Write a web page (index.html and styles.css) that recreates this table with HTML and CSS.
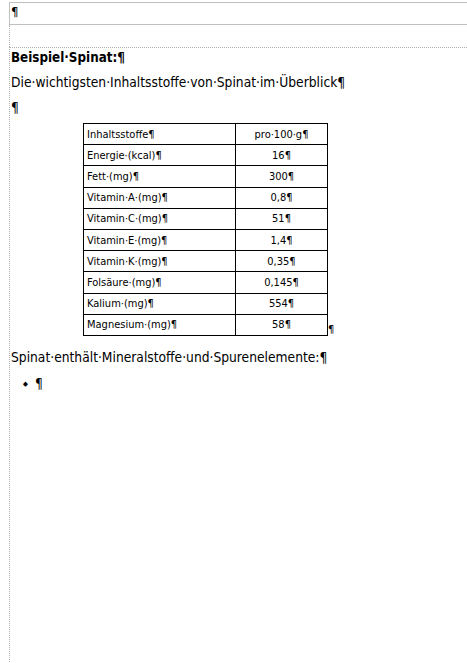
FILE: index.html
```html
<!DOCTYPE html>
<html lang="de">
<head>
<meta charset="utf-8">
<link rel="stylesheet" href="styles.css">
</head>
<body>
<div class="header"><span class="pil">¶</span></div>
<div class="gap"></div>
<div class="page">
  <p class="h">Beispiel·Spinat:<span class="pil">¶</span></p>
  <p class="t">Die·wichtigsten·Inhaltsstoffe·von·Spinat·im·Überblick<span class="pil">¶</span></p>
  <p class="t empty"><span class="pil">¶</span></p>
  <div class="tablewrap">
    <table class="tbl">
      <tr><td>Inhaltsstoffe¶</td><td>pro·100·g¶</td></tr>
      <tr><td>Energie·(kcal)¶</td><td>16¶</td></tr>
      <tr><td>Fett·(mg)¶</td><td>300¶</td></tr>
      <tr><td>Vitamin·A·(mg)¶</td><td>0,8¶</td></tr>
      <tr><td>Vitamin·C·(mg)¶</td><td>51¶</td></tr>
      <tr><td>Vitamin·E·(mg)¶</td><td>1,4¶</td></tr>
      <tr><td>Vitamin·K·(mg)¶</td><td>0,35¶</td></tr>
      <tr><td>Folsäure·(mg)¶</td><td>0,145¶</td></tr>
      <tr><td>Kalium·(mg)¶</td><td>554¶</td></tr>
      <tr><td>Magnesium·(mg)¶</td><td>58¶</td></tr>
    </table>
    <span class="rowend">¶</span>
  </div>
  <p class="t after">Spinat·enthält·Mineralstoffe·und·Spurenelemente:<span class="pil">¶</span></p>
  <p class="bullet"><span class="dia">◆</span><span class="pil">¶</span></p>
</div>
</body>
</html>
```
FILE: styles.css
```css
html, body { margin: 0; padding: 0; background: #fff; }
body {
  width: 467px; height: 663px; overflow: hidden;
  font-family: "DejaVu Sans Condensed", "DejaVu Sans", sans-serif;
  color: #000;
}
.header {
  margin-top: 2px;
  margin-left: 9px;
  height: 21px;
  border-top: 1px solid #c0c0c0;
  border-bottom: 1px solid #c0c0c0;
  border-left: 1px solid #c0c0c0;
  font-size: 13px;
  line-height: 18px;
  padding-left: 1px;
}
.gap {
  margin-left: 9px;
  height: 22px;
  border-left: 1px dotted #b0b0b0;
}
.page {
  margin-left: 9px;
  height: 620px;
  border-left: 1px dotted #b0b0b0;
  border-top: 1px dotted #b0b0b0;
  padding-left: 1px;
}
p { margin: 0; }
.h { font-weight: bold; font-size: 13.3px; line-height: 16px; margin-top: 2px; }
.t { font-size: 13.7px; line-height: 16px; margin-top: 8px; }
.empty { margin-top: 9px; }
.tablewrap { display: flex; align-items: flex-end; margin-top: 8px; margin-left: 72px; }
.tbl { border-collapse: collapse; font-size: 11px; }
.tbl td { border: 1px solid #000; height: 20.2px; padding: 0 3px; line-height: 13px; }
.tbl td:first-child { width: 145px; }
.tbl td:last-child { width: 85px; text-align: center; }
.rowend { font-size: 11px; line-height: 13px; }
.after { margin-top: 13px; }
.bullet { font-size: 13.7px; line-height: 16px; margin-top: 10px; padding-left: 12px; }
.dia { font-size: 7px; display: inline-block; width: 12px; vertical-align: 2px; }
```
